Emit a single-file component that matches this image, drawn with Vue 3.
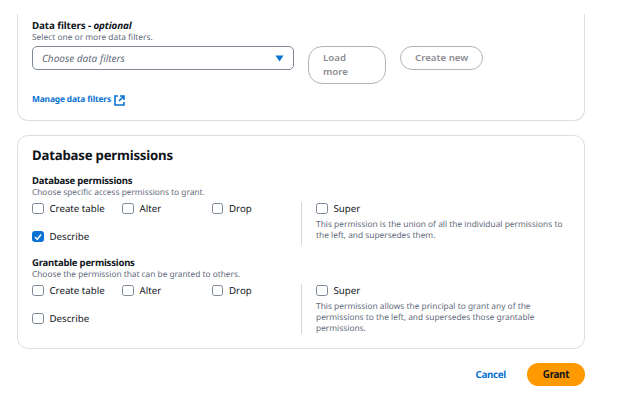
<template>
  <div class="page">
    <section class="card filters">
      <div class="label">Data filters - <em>optional</em></div>
      <div class="hint">Select one or more data filters.</div>
      <div class="filter-row">
        <div class="select">
          <span>Choose data filters</span>
          <svg width="9" height="7" viewBox="0 0 9 7"><path d="M0.5 0.5h8L4.5 6.5z" fill="#0972d3" /></svg>
        </div>
        <button class="btn load">Load more</button>
        <button class="btn create">Create new</button>
      </div>
      <a class="manage">
        Manage data filters
        <svg width="11" height="11" viewBox="0 0 11 11" fill="none" stroke="#0972d3" stroke-width="1.6">
          <path d="M4 1H1v9h9V7" />
          <path d="M6 1h4v4M10 1L5 6" />
        </svg>
      </a>
    </section>

    <section class="card perms">
      <h2>Database permissions</h2>
      <div v-for="group in groups" :key="group.title" class="group">
        <div class="label">{{ group.title }}</div>
        <div class="hint">{{ group.hint }}</div>
        <div class="group-body">
          <div class="options">
            <label v-for="opt in group.options" :key="opt.name" class="option">
              <span class="box" :class="{ checked: opt.checked }">
                <svg v-if="opt.checked" width="8" height="8" viewBox="0 0 8 8" fill="none" stroke="#fff" stroke-width="1.5">
                  <path d="M1 4l2.2 2.4L7 1.5" />
                </svg>
              </span>
              {{ opt.name }}
            </label>
          </div>
          <div class="super">
            <label class="option">
              <span class="box"></span>
              Super
            </label>
            <p>{{ group.superText }}</p>
          </div>
        </div>
      </div>
    </section>

    <footer>
      <a class="cancel">Cancel</a>
      <button class="grant">Grant</button>
    </footer>
  </div>
</template>

<script setup>
const groups = [
  {
    title: 'Database permissions',
    hint: 'Choose specific access permissions to grant.',
    options: [
      { name: 'Create table' },
      { name: 'Alter' },
      { name: 'Drop' },
      { name: 'Describe', checked: true }
    ],
    superText: 'This permission is the union of all the individual permissions to the left, and supersedes them.'
  },
  {
    title: 'Grantable permissions',
    hint: 'Choose the permission that can be granted to others.',
    options: [
      { name: 'Create table' },
      { name: 'Alter' },
      { name: 'Drop' },
      { name: 'Describe' }
    ],
    superText: 'This permission allows the principal to grant any of the permissions to the left, and supersedes those grantable permissions.'
  }
]
</script>

<style>
body {
  background: #fff;
}
</style>

<style scoped>
.page {
  width: 625px;
  height: 415px;
  overflow: hidden;
  padding: 14px 0 0 17px;
  box-sizing: border-box;
  font-family: "Noto Sans", "Open Sans", sans-serif;
  text-rendering: geometricPrecision;
  font-size: 9.8px;
  line-height: 12px;
  color: #16191f;
}
.card {
  width: 568px;
  box-sizing: border-box;
  background: #fff;
  border: 1px solid #dcdee0;
  border-radius: 11px;
  padding: 0 14px;
}
.filters {
  height: 107px;
  border-top: none;
  border-top-left-radius: 0;
  border-top-right-radius: 0;
  padding-top: 5px;
}
.label {
  font-weight: 700;
  font-size: 9.5px;
  letter-spacing: -0.2px;
  line-height: 13px;
  color: #0f141a;
}
.filters .label {
  font-size: 9.8px;
  letter-spacing: -0.1px;
}
.hint {
  font-size: 8.3px;
  line-height: 12px;
  color: #5f6b7a;
}
.filters .hint {
  font-size: 8.4px;
}
.filter-row {
  display: flex;
  align-items: flex-start;
  margin-top: 2px;
}
.select {
  width: 262px;
  height: 24px;
  box-sizing: border-box;
  border: 1.5px solid #808a96;
  border-radius: 5px;
  padding: 0 9px 0 9px;
  display: flex;
  align-items: center;
  justify-content: space-between;
  font-style: italic;
  font-size: 10px;
  color: #5f6b7a;
}
.btn {
  font-family: inherit;
  font-size: 9.7px;
  font-weight: 600;
  line-height: 14.5px;
  color: #8d8d94;
  background: #fff;
  border: 1.5px solid #b4b4bb;
  text-align: left;
  padding: 3.5px 14px;
}
.load {
  width: 78px;
  height: 38px;
  border-radius: 14px;
  margin-left: 14px;
}
.create {
  width: 83px;
  height: 24px;
  border-radius: 12px;
  margin-left: 14px;
  white-space: nowrap;
}
.manage {
  display: flex;
  align-items: center;
  gap: 3px;
  margin-top: 10px;
  color: #0972d3;
  font-size: 8.4px;
  letter-spacing: -0.15px;
  font-weight: 700;
}
.perms {
  height: 214px;
  margin-top: 14px;
  padding-top: 10px;
}
h2 {
  margin: 0 0 9.5px;
  font-size: 13.2px;
  letter-spacing: -0.2px;
  line-height: 18px;
  font-weight: 700;
  color: #0f141a;
}
.group {
  height: 82px;
}
.group-body {
  display: flex;
  align-items: flex-start;
  margin-top: 3px;
}
.options {
  width: 269px;
  display: grid;
  grid-template-columns: 90px 89.5px 89.5px;
  grid-auto-rows: 28px;
}
.option {
  display: flex;
  align-items: center;
  gap: 6px;
  height: 14px;
  white-space: nowrap;
  font-size: 9.7px;
  color: #0f141a;
}
.box {
  width: 11.5px;
  height: 11.5px;
  box-sizing: border-box;
  border: 1.5px solid #7d8998;
  border-radius: 2.5px;
  background: #fff;
  display: flex;
  align-items: center;
  justify-content: center;
}
.box.checked {
  background: #0972d3;
  border-color: #0972d3;
}
.super {
  border-left: 1px solid #d5d7da;
  padding-left: 14px;
  width: 270px;
  min-height: 43px;
}
.super p {
  margin: 3.5px 0 0;
  font-size: 8.35px;
  line-height: 11px;
  color: #5f6b7a;
}
footer {
  width: 568px;
  display: flex;
  justify-content: flex-end;
  align-items: center;
  margin-top: 14px;
}
.cancel {
  color: #0972d3;
  font-weight: 700;
  font-size: 9.8px;
  letter-spacing: -0.3px;
  margin-right: 21px;
}
.grant {
  width: 58px;
  height: 23px;
  border: none;
  border-radius: 12px;
  background: #ff9900;
  font-family: inherit;
  font-size: 9.8px;
  letter-spacing: -0.3px;
  font-weight: 700;
  color: #0f141a;
}
</style>
